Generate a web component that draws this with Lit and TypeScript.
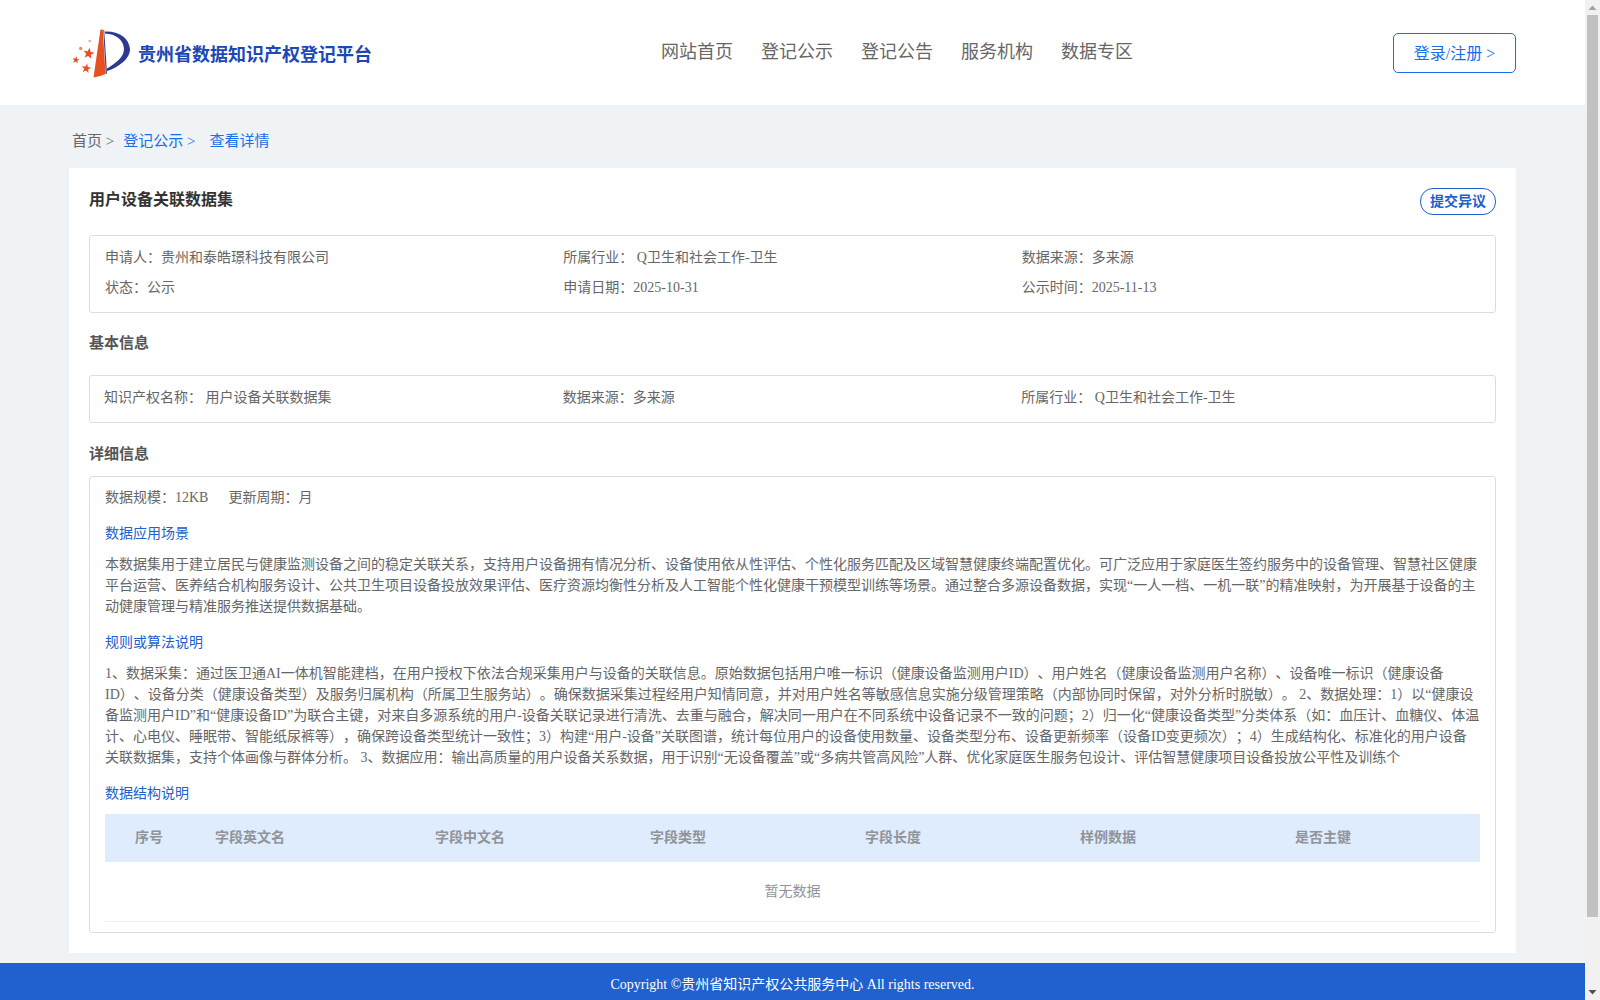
import { LitElement, html, css, svg } from 'lit';
import { customElement } from 'lit/decorators.js';

const NAV = ['网站首页', '登记公示', '登记公告', '服务机构', '数据专区'];
const COLS = ['字段英文名', '字段中文名', '字段类型', '字段长度', '样例数据', '是否主键'];

const SCENE =
  '本数据集用于建立居民与健康监测设备之间的稳定关联关系，支持用户设备拥有情况分析、设备使用依从性评估、个性化服务匹配及区域智慧健康终端配置优化。可广泛应用于家庭医生签约服务中的设备管理、智慧社区健康平台运营、医养结合机构服务设计、公共卫生项目设备投放效果评估、医疗资源均衡性分析及人工智能个性化健康干预模型训练等场景。通过整合多源设备数据，实现“一人一档、一机一联”的精准映射，为开展基于设备的主动健康管理与精准服务推送提供数据基础。';

const RULES =
  '1、数据采集：通过医卫通AI一体机智能建档，在用户授权下依法合规采集用户与设备的关联信息。原始数据包括用户唯一标识（健康设备监测用户ID）、用户姓名（健康设备监测用户名称）、设备唯一标识（健康设备ID）、设备分类（健康设备类型）及服务归属机构（所属卫生服务站）。确保数据采集过程经用户知情同意，并对用户姓名等敏感信息实施分级管理策略（内部协同时保留，对外分析时脱敏）。 2、数据处理：1）以“健康设备监测用户ID”和“健康设备ID”为联合主键，对来自多源系统的用户-设备关联记录进行清洗、去重与融合，解决同一用户在不同系统中设备记录不一致的问题；2）归一化“健康设备类型”分类体系（如：血压计、血糖仪、体温计、心电仪、睡眠带、智能纸尿裤等），确保跨设备类型统计一致性；3）构建“用户-设备”关联图谱，统计每位用户的设备使用数量、设备类型分布、设备更新频率（设备ID变更频次）；4）生成结构化、标准化的用户设备关联数据集，支持个体画像与群体分析。 3、数据应用：输出高质量的用户设备关系数据，用于识别“无设备覆盖”或“多病共管高风险”人群、优化家庭医生服务包设计、评估智慧健康项目设备投放公平性及训练个';

// five pointed star for the logo
function star(cx: number, cy: number, r: number, rot: number) {
  const pts: string[] = [];
  for (let i = 0; i < 10; i++) {
    const rad = i % 2 ? r * 0.42 : r;
    const a = ((rot + i * 36 - 90) * Math.PI) / 180;
    pts.push(`${(cx + rad * Math.cos(a)).toFixed(2)},${(cy + rad * Math.sin(a)).toFixed(2)}`);
  }
  return svg`<polygon points=${pts.join(' ')} fill="#e8501f" />`;
}

@customElement('app-root')
export class AppRoot extends LitElement {
  static styles = css`
    :host {
      display: flex;
      height: 1000px;
      overflow: hidden;
      background: #eff3f6;
      font-family: 'Liberation Serif', 'Noto Sans CJK SC', serif;
      font-size: 14px;
      color: #666;
      text-spacing-trim: space-all;
    }

    .page {
      flex: 1;
      min-width: 0;
      display: flex;
      flex-direction: column;
    }

    header {
      height: 105px;
      flex: none;
      box-sizing: border-box;
      background: #fff;
      display: flex;
      align-items: center;
      padding: 0 69px 0 72px;
    }

    .logo {
      width: 589px;
      flex: none;
      display: flex;
      align-items: center;
      gap: 8px;
      font-size: 18px;
      font-weight: bold;
      color: #1d47b5;
    }

    .logo svg {
      width: 58px;
      height: 50px;
      flex: none;
    }

    .logo span {
      padding-top: 1px;
    }

    nav {
      flex: 1;
      display: flex;
      gap: 28px;
      font-size: 18px;
      color: #666;
      padding-bottom: 6px;
    }

    .login {
      width: 123px;
      height: 40px;
      box-sizing: border-box;
      border: 1px solid #1a6ee8;
      border-radius: 5px;
      padding-bottom: 2px;
      display: flex;
      align-items: center;
      justify-content: center;
      color: #1a6ee8;
      font-size: 16px;
    }

    .crumb {
      height: 63px;
      flex: none;
      box-sizing: border-box;
      padding: 5px 72px 0;
      display: flex;
      align-items: center;
      font-size: 15px;
      color: #666;
    }

    .crumb .link {
      color: #1a6ee8;
      margin-left: 9px;
    }

    .crumb .link + .link {
      margin-left: 14px;
    }

    .card {
      margin: 0 69px;
      height: 785px;
      flex: none;
      box-sizing: border-box;
      background: #fff;
      padding: 20px;
    }

    .title-row {
      display: flex;
      justify-content: space-between;
      align-items: flex-start;
      height: 47px;
    }

    h1 {
      margin: 0;
      font-size: 16px;
      line-height: 24px;
      color: #333;
    }

    .dispute {
      box-sizing: border-box;
      height: 27px;
      width: 76px;
      border: 1px solid #205fce;
      border-radius: 13px;
      color: #205fce;
      font-weight: bold;
      font-size: 14px;
      line-height: 25px;
      text-align: center;
    }

    .box {
      border: 1px solid #ddd;
      border-radius: 3px;
      padding: 0 15px;
    }

    .grid {
      display: grid;
      grid-template-columns: repeat(3, 1fr);
      line-height: 30px;
    }

    .summary {
      padding-top: 7px;
      padding-bottom: 9px;
    }

    .basic {
      padding-top: 7px;
      padding-bottom: 9px;
      padding-left: 14px;
    }

    h2 {
      margin: 0;
      font-size: 15px;
      line-height: 20px;
      color: #555;
    }

    .h-basic {
      margin: 20px 0 22px;
    }

    .h-detail {
      margin: 21px 0 12px;
    }

    .detail {
      padding-top: 10px;
      padding-bottom: 10px;
      line-height: 21px;
    }

    .meta {
      display: flex;
      gap: 20px;
    }

    .label {
      margin-top: 15px;
      color: #205fce;
    }

    p {
      margin: 10px 0 0;
    }

    .thead {
      margin-top: 10px;
      height: 48px;
      box-sizing: border-box;
      padding-bottom: 2px;
      background: #dfecfd;
      display: grid;
      grid-template-columns: 110px 220px repeat(4, 215px) 1fr;
      align-items: center;
      font-weight: bold;
      color: #909399;
    }

    .thead .no {
      width: 88px;
      text-align: center;
    }

    .empty {
      height: 59px;
      border-bottom: 1px solid #ebeef5;
      display: flex;
      align-items: center;
      justify-content: center;
      color: #909399;
    }

    footer {
      margin-top: 10px;
      flex: 1;
      background: #2161cf;
      color: #fff;
      text-align: center;
      line-height: 44px;
    }

    .scroll {
      width: 15px;
      flex: none;
      background: #f1f1f1;
      display: flex;
      flex-direction: column;
      align-items: center;
    }

    .arrow {
      height: 15px;
      width: 15px;
      flex: none;
    }

    .thumb {
      width: 11px;
      height: 902px;
      flex: none;
      background: #c1c1c1;
    }

    .scroll .arrow:last-child {
      margin-top: auto;
    }
  `;

  render() {
    return html`
      <div class="page">
        <header>
          <div class="logo">
            <svg viewBox="0 0 58 50">
              <path d="M28.5 1.5 L30.8 1.5 L33.5 46 Q27 49 21.5 49.5 Z" fill="#e8501f" />
              <path d="M31.3 2 L32.2 2 L35 45.5 L33.8 46 Z" fill="#2b3990" />
              <path d="M33 3.5 C47 3 57 10 58 21 C58.5 30 47 39 35 43 L35 40.5 C44 35 52 29 52 21 C51.5 12 44 6 33 5.5 Z" fill="#2b3990" />
              ${star(16.7, 25.5, 5.8, 10)}
              ${star(3.9, 32, 3.8, 10)}
              ${star(14.3, 40.5, 5, 10)}
              <circle cx="8.7" cy="20.5" r="1.7" fill="#ee8a66" />
              <circle cx="17.7" cy="13" r="1.3" fill="#f2a88c" />
            </svg>
            <span>贵州省数据知识产权登记平台</span>
          </div>
          <nav>${NAV.map((n) => html`<span>${n}</span>`)}</nav>
          <div class="login">登录/注册 &gt;</div>
        </header>
        <div class="crumb">
          <span>首页 &gt;</span>
          <span class="link">登记公示 &gt;</span>
          <span class="link">查看详情</span>
        </div>
        <div class="card">
          <div class="title-row">
            <h1>用户设备关联数据集</h1>
            <div class="dispute">提交异议</div>
          </div>
          <div class="box grid summary">
            <div>申请人：贵州和泰皓璟科技有限公司</div>
            <div>所属行业： Q卫生和社会工作-卫生</div>
            <div>数据来源：多来源</div>
            <div>状态：公示</div>
            <div>申请日期：2025-10-31</div>
            <div>公示时间：2025-11-13</div>
          </div>
          <h2 class="h-basic">基本信息</h2>
          <div class="box grid basic">
            <div>知识产权名称： 用户设备关联数据集</div>
            <div>数据来源：多来源</div>
            <div>所属行业： Q卫生和社会工作-卫生</div>
          </div>
          <h2 class="h-detail">详细信息</h2>
          <div class="box detail">
            <div class="meta"><span>数据规模：12KB</span><span>更新周期：月</span></div>
            <div class="label">数据应用场景</div>
            <p>${SCENE}</p>
            <div class="label">规则或算法说明</div>
            <p>${RULES}</p>
            <div class="label">数据结构说明</div>
            <div class="thead">
              <div class="no">序号</div>
              ${COLS.map((c) => html`<div>${c}</div>`)}
            </div>
            <div class="empty">暂无数据</div>
          </div>
        </div>
        <footer>Copyright ©贵州省知识产权公共服务中心 All rights reserved.</footer>
      </div>
      <div class="scroll">
        <svg class="arrow" viewBox="0 0 15 15"><path d="M3.5 10 L7.5 5.5 L11.5 10 Z" fill="#a3a3a3" /></svg>
        <div class="thumb"></div>
        <svg class="arrow" viewBox="0 0 15 15"><path d="M3.5 5 L11.5 5 L7.5 9.5 Z" fill="#505050" /></svg>
      </div>
    `;
  }
}
